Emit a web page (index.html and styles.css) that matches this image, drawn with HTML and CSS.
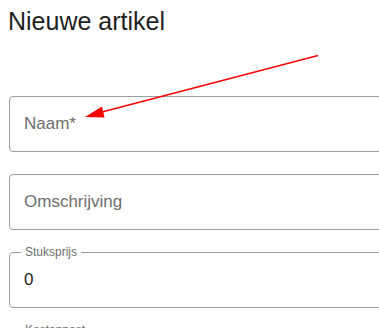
FILE: index.html
```html
<!DOCTYPE html>
<html lang="nl">
<head>
<meta charset="utf-8">
<title>Nieuwe artikel</title>
<link rel="stylesheet" href="styles.css">
</head>
<body>
<div class="page">
  <h1 class="title">Nieuwe artikel</h1>
  <form class="form">
    <div class="box"><span class="placeholder">Naam*</span></div>
    <div class="box"><span class="placeholder">Omschrijving</span></div>
    <div class="box box-notched"><span class="float-label">Stuksprijs</span><span class="value">0</span></div>
    <div class="box box-notched"><span class="float-label">Kostenpost</span><span class="value"></span></div>
  </form>
</div>
<svg class="arrow" width="379" height="328" viewBox="0 0 379 328" xmlns="http://www.w3.org/2000/svg">
  <line x1="318" y1="55.5" x2="102" y2="112" stroke="#ff0000" stroke-width="1.3"/>
  <polygon points="85,117 102,106.5 104.5,117.5" fill="#ff0000"/>
</svg>
</body>
</html>
```

FILE: styles.css
```css
html, body {
  margin: 0;
  padding: 0;
  background: #ffffff;
}
body {
  width: 379px;
  height: 328px;
  overflow: hidden;
  position: relative;
  font-family: "Liberation Sans", Arial, sans-serif;
}
.page {
  padding: 9px 0 0 8px;
}
.title {
  margin: 0;
  font-size: 25px;
  line-height: 25px;
  font-weight: 400;
  color: #1f1f1f;
}
.form {
  margin-top: 62px;
  margin-left: 1px;
  display: flex;
  flex-direction: column;
  gap: 22px;
}
.box {
  position: relative;
  box-sizing: border-box;
  width: 430px;
  height: 56px;
  border: 1px solid #9d9d9d;
  border-radius: 4px;
  padding: 0 14px;
  display: flex;
  align-items: center;
  font-size: 17px;
}
.placeholder {
  color: #6e6e6e;
}
.value {
  color: #1f1f1f;
}
.float-label {
  position: absolute;
  left: 11px;
  top: -8px;
  padding: 0 4px;
  background: #ffffff;
  font-size: 12px;
  line-height: 14px;
  color: #6e6e6e;
}
.arrow {
  position: absolute;
  left: 0;
  top: 0;
  pointer-events: none;
}
```
